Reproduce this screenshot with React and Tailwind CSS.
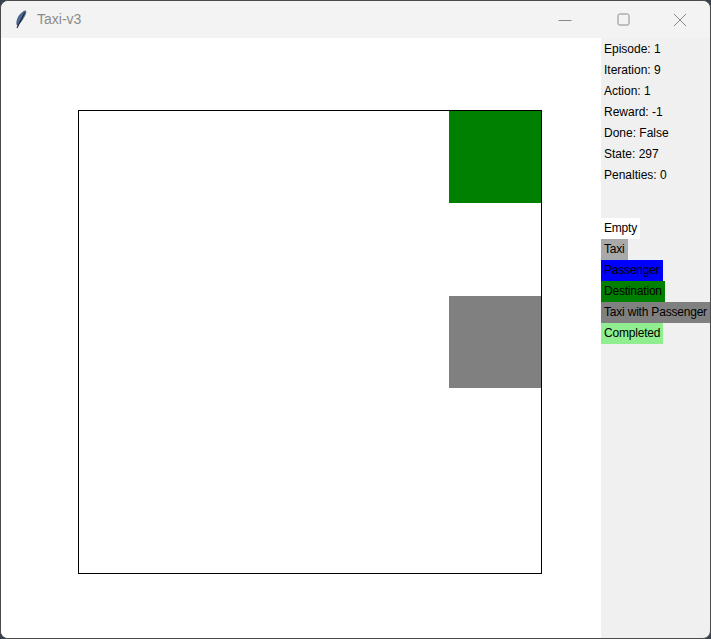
import React from 'react';

// Cell colours used by the legend and the grid
const legend = [
    { label: 'Empty', cls: 'bg-white' },
    { label: 'Taxi', cls: 'bg-[#a9a9a9]' },
    { label: 'Passenger', cls: 'bg-[#0000ff]' },
    { label: 'Destination', cls: 'bg-[#008000]' },
    { label: 'Taxi with Passenger', cls: 'bg-[#808080]' },
    { label: 'Completed', cls: 'bg-[#90ee90]' },
];

const stats = [
    'Episode: 1',
    'Iteration: 9',
    'Action: 1',
    'Reward: -1',
    'Done: False',
    'State: 297',
    'Penalties: 0',
];

// 5x5 board, only two cells are filled
const cellClass = (row, col) => {
    if (row === 0 && col === 4) return 'bg-[#008000]';
    if (row === 2 && col === 4) return 'bg-[#808080]';
    return 'bg-white';
};

function Feather() {
    return (
        <svg width="12" height="20" viewBox="0 0 12 20">
            <path d="M10.5 0.8 C6.5 2 3 6 2 11 C1.6 13 1.8 14.6 2.4 15.4 C4.5 14 7.5 10 9.5 6 C10.8 3.6 11.2 1.8 10.5 0.8 Z" fill="#4a6a9a" stroke="#2c3e5c" strokeWidth="0.6" />
            <path d="M9.5 3 L2.2 17.5" stroke="#1e2a3c" strokeWidth="1.2" strokeLinecap="round" />
        </svg>
    );
}

function TitleBar() {
    return (
        <div className="flex items-center h-[37px] bg-[#f3f3f3] rounded-t-[7px]">
            <div className="w-[36px] flex justify-center pl-[3px]">
                <Feather />
            </div>
            <span className="text-[14px] text-[#8b8b8b]">Taxi-v3</span>
            <div className="ml-auto flex h-full">
                <div className="w-[58px] flex items-center justify-center">
                    <svg width="14" height="14" viewBox="0 0 14 14">
                        <path d="M0.5 7.5 H13.5" stroke="#8a8a8a" strokeWidth="1" />
                    </svg>
                </div>
                <div className="w-[58px] flex items-center justify-center">
                    <svg width="13" height="13" viewBox="0 0 13 13">
                        <rect x="1" y="1" width="11" height="11" rx="1.5" fill="none" stroke="#8a8a8a" strokeWidth="1" />
                    </svg>
                </div>
                <div className="w-[58px] flex items-center justify-center pr-[2px]">
                    <svg width="14" height="14" viewBox="0 0 14 14">
                        <path d="M1 1 L13 13 M13 1 L1 13" stroke="#8a8a8a" strokeWidth="1" />
                    </svg>
                </div>
            </div>
        </div>
    );
}

export default function App() {
    return (
        <div className="w-[711px] h-[639px] bg-[#39414c]" style={{ fontFamily: '"Liberation Sans", Arial, sans-serif' }}>
            <div className="w-full h-full flex flex-col border border-[#4a4a4a] rounded-[8px] overflow-hidden bg-[#f0f0f0]">
                <TitleBar />
                <div className="flex flex-1 min-w-0">
                    {/* Board canvas */}
                    <div className="w-[600px] shrink-0 bg-white pl-[77px] pt-[72px]">
                        <div className="w-[464px] h-[464px] border border-black grid grid-cols-5 grid-rows-5">
                            {Array.from({ length: 25 }).map((_, i) => (
                                <div key={i} className={cellClass(Math.floor(i / 5), i % 5)} />
                            ))}
                        </div>
                    </div>

                    {/* Info panel */}
                    <div className="flex-1 min-w-0 overflow-hidden flex flex-col items-start pt-[1px] text-[12px] text-black">
                        <div className="flex flex-col pl-[3px]">
                            {stats.map((s) => (
                                <div key={s} className="h-[21px] leading-[21px] whitespace-nowrap">{s}</div>
                            ))}
                        </div>
                        <div className="flex flex-col items-start mt-[32px] tracking-[-0.2px]">
                            {legend.map((l) => (
                                <div key={l.label} className={`h-[21px] leading-[21px] px-[3px] whitespace-nowrap ${l.cls}`}>
                                    {l.label}
                                </div>
                            ))}
                        </div>
                    </div>
                </div>
            </div>
        </div>
    );
}
